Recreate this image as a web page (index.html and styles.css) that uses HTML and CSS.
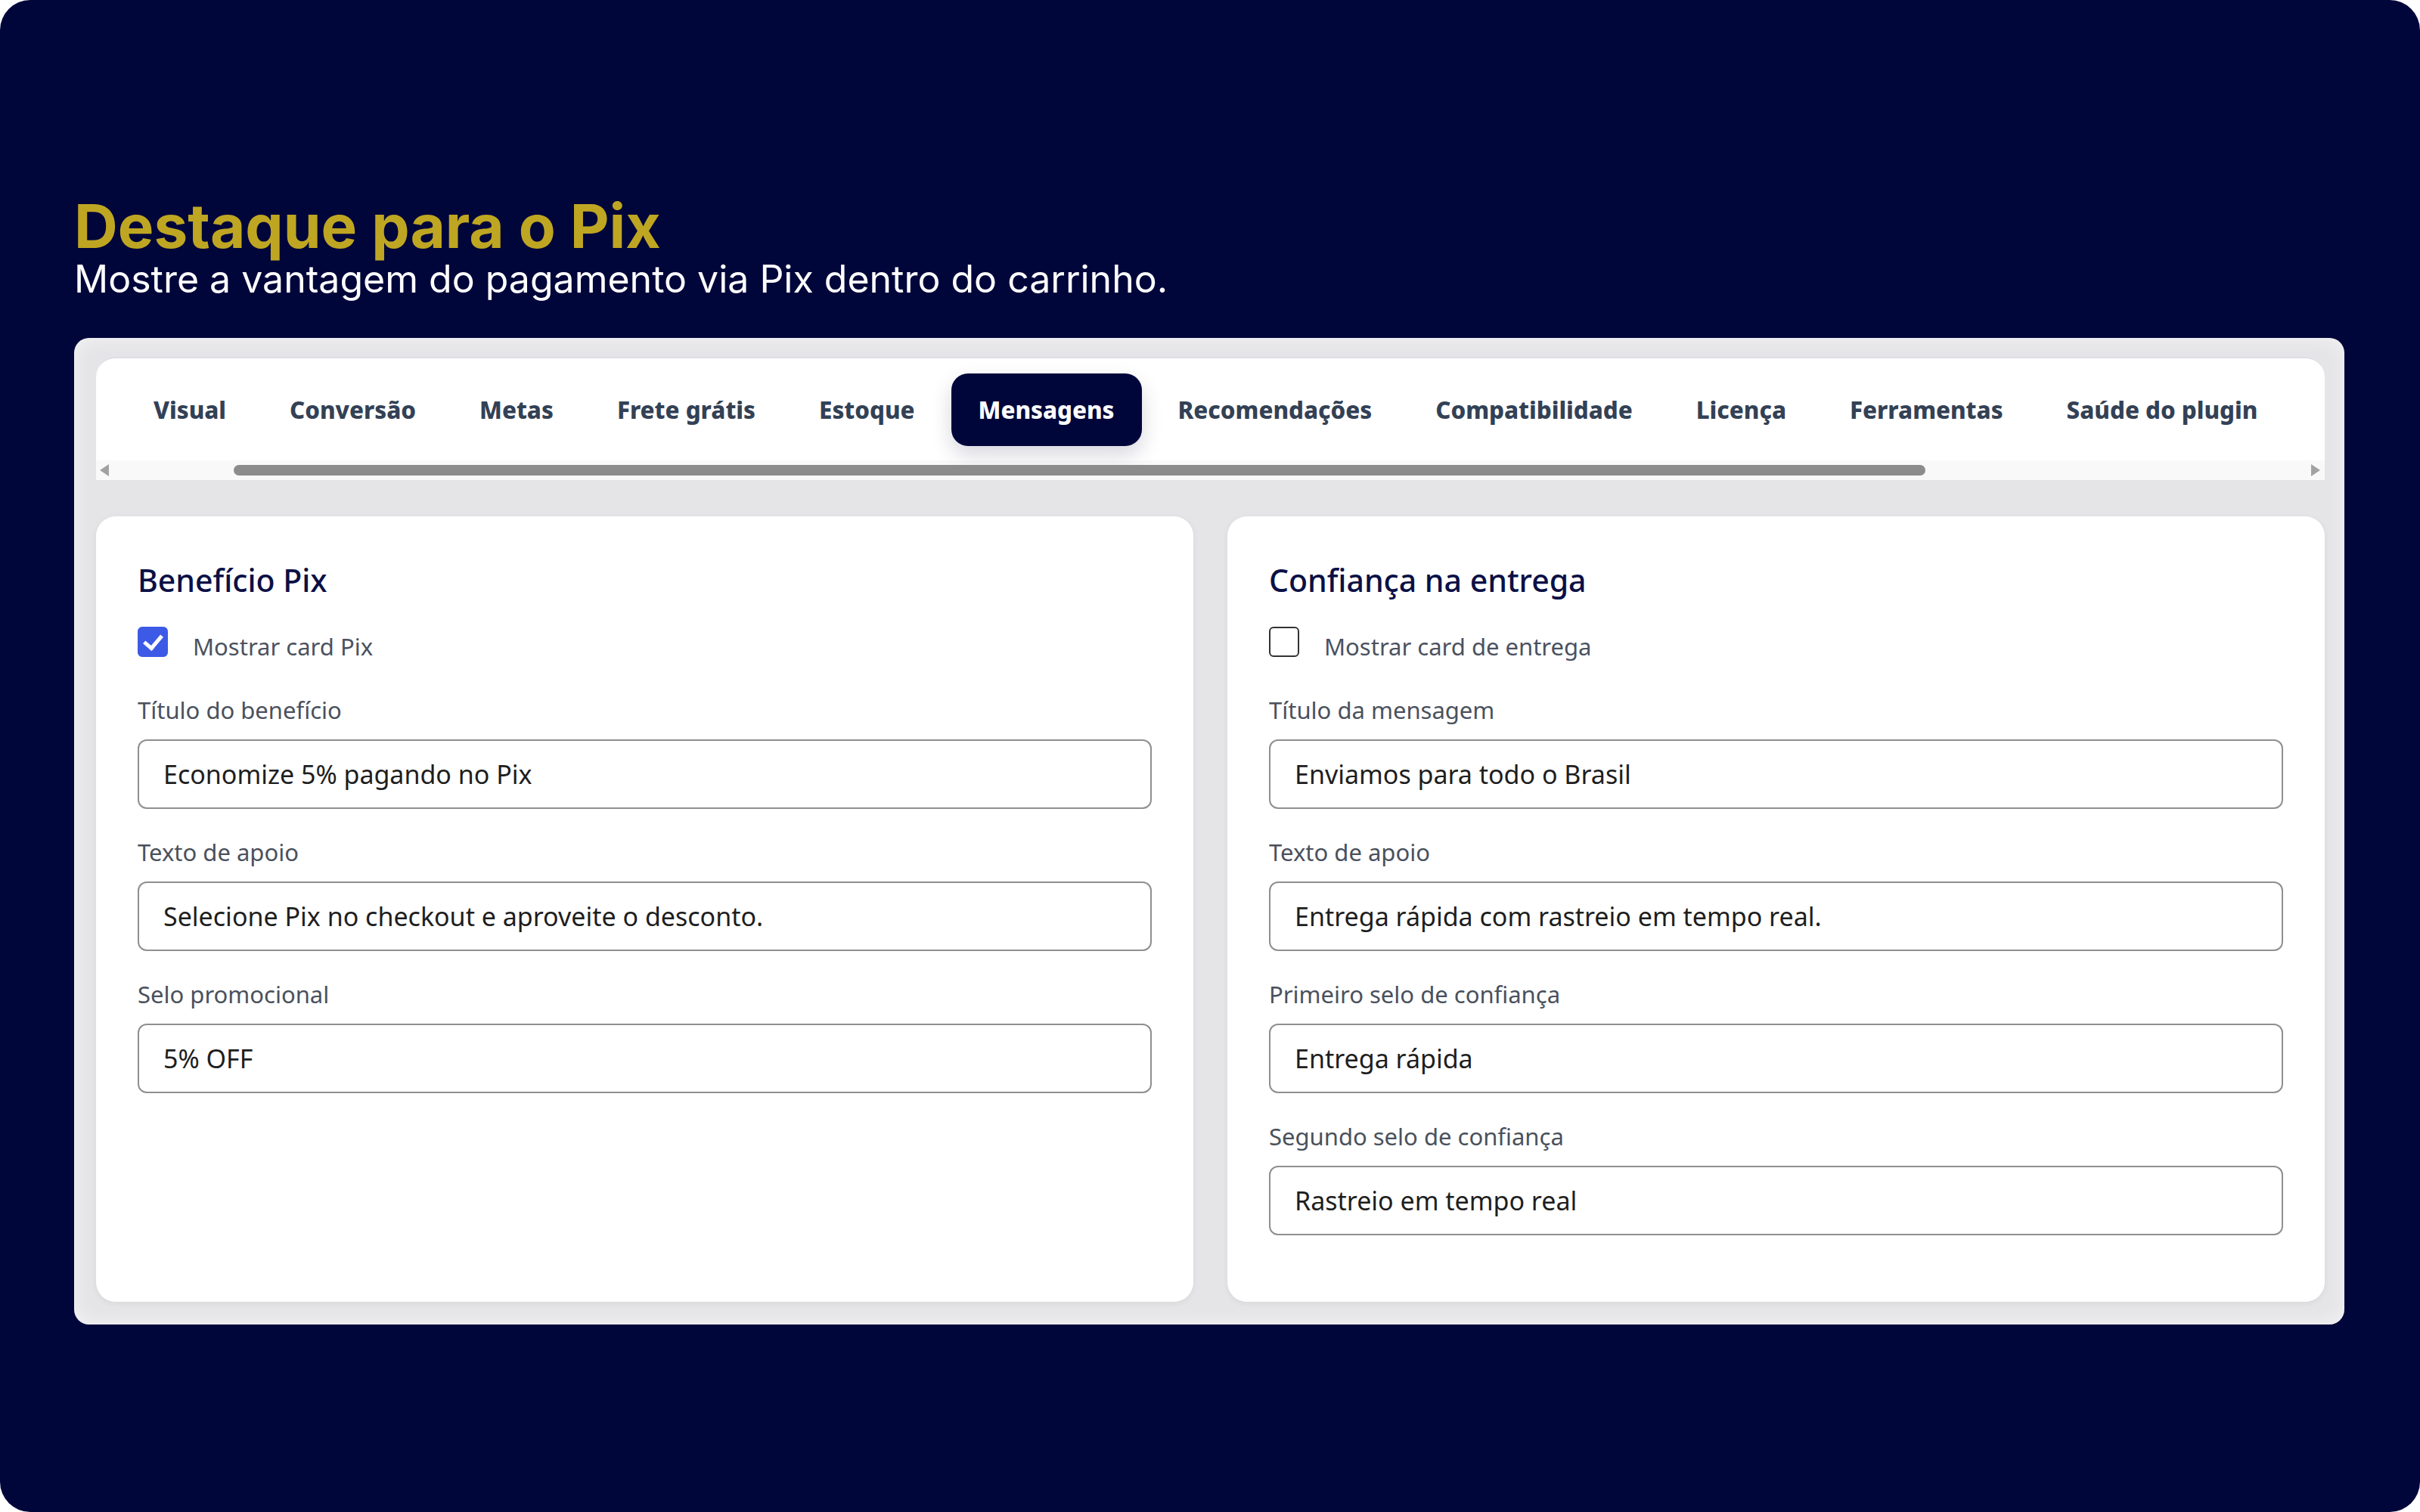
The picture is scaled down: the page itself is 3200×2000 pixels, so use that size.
FILE: index.html
```html
<!DOCTYPE html>
<html lang="pt-BR">
<head>
  <meta charset="UTF-8">
  <meta name="viewport" content="width=device-width, initial-scale=1.0">
  <title>Destaque para o Pix</title>
  <link rel="stylesheet" href="styles.css">
</head>
<body>
  <div class="frame">
    <header class="intro">
      <h1>Destaque para o Pix</h1>
      <p>Mostre a vantagem do pagamento via Pix dentro do carrinho.</p>
    </header>

    <div class="panel">
      <div class="tabs">
        <nav class="tab-list">
          <button class="tab">Visual</button>
          <button class="tab">Conversão</button>
          <button class="tab">Metas</button>
          <button class="tab">Frete grátis</button>
          <button class="tab">Estoque</button>
          <button class="tab active">Mensagens</button>
          <button class="tab">Recomendações</button>
          <button class="tab">Compatibilidade</button>
          <button class="tab">Licença</button>
          <button class="tab">Ferramentas</button>
          <button class="tab">Saúde do plugin</button>
        </nav>
        <div class="scrollbar">
          <span class="arrow arrow-left"></span>
          <span class="thumb"></span>
          <span class="arrow arrow-right"></span>
        </div>
      </div>

      <div class="cards">
        <section class="card">
          <h2>Benefício Pix</h2>
          <label class="check">
            <input type="checkbox" checked>
            <span>Mostrar card Pix</span>
          </label>
          <div class="field">
            <label for="pix-title">Título do benefício</label>
            <input type="text" id="pix-title" value="Economize 5% pagando no Pix">
          </div>
          <div class="field">
            <label for="pix-text">Texto de apoio</label>
            <input type="text" id="pix-text" value="Selecione Pix no checkout e aproveite o desconto.">
          </div>
          <div class="field">
            <label for="pix-badge">Selo promocional</label>
            <input type="text" id="pix-badge" value="5% OFF">
          </div>
        </section>

        <section class="card">
          <h2>Confiança na entrega</h2>
          <label class="check">
            <input type="checkbox">
            <span>Mostrar card de entrega</span>
          </label>
          <div class="field">
            <label for="ship-title">Título da mensagem</label>
            <input type="text" id="ship-title" value="Enviamos para todo o Brasil">
          </div>
          <div class="field">
            <label for="ship-text">Texto de apoio</label>
            <input type="text" id="ship-text" value="Entrega rápida com rastreio em tempo real.">
          </div>
          <div class="field">
            <label for="ship-badge-1">Primeiro selo de confiança</label>
            <input type="text" id="ship-badge-1" value="Entrega rápida">
          </div>
          <div class="field">
            <label for="ship-badge-2">Segundo selo de confiança</label>
            <input type="text" id="ship-badge-2" value="Rastreio em tempo real">
          </div>
        </section>
      </div>
    </div>
  </div>
</body>
</html>
```

FILE: styles.css
```css
body {
  margin: 0;
  background: #fff;
  font-family: 'Noto Sans', 'Open Sans', sans-serif;
}
.frame {
  width: 3200px;
  height: 2000px;
  box-sizing: border-box;
  padding: 259px 100px 0 98px;
  background: #00063a;
  border-radius: 40px;
}
.intro {
  margin-bottom: 48px;
  font-family: Inter, sans-serif;
}
.intro h1 {
  margin: 0;
  font-size: 80px;
  line-height: 80px;
  font-weight: 700;
  color: #bfa622;
}
.intro p {
  margin: 0;
  font-size: 50px;
  line-height: 60px;
  color: #fff;
}
.panel {
  padding: 25px 26px 30px 29px;
  background: #e5e5e8;
  border-radius: 20px;
  box-shadow: inset 0 0 24px rgba(255, 255, 255, 0.6);
}

/* tab strip */
.tabs {
  background: #fff;
  border-top: 2px solid #dedee6;
  border-radius: 26px 26px 0 0;
}
.tab-list {
  display: flex;
  gap: 12px;
  padding: 20px 40px 19px;
}
.tab {
  height: 96px;
  padding: 0 36px;
  border: none;
  border-radius: 22px;
  background: none;
  font-family: 'Noto Sans', sans-serif;
  font-size: 31.3px;
  font-weight: 800;
  color: #334155;
  white-space: nowrap;
  cursor: pointer;
}
.tab.active {
  background: #00063a;
  color: #fff;
  box-shadow: 0 12px 28px rgba(0, 6, 58, 0.16);
}
.scrollbar {
  display: flex;
  align-items: center;
  height: 26px;
  padding: 0 6px 0 5px;
  background: #f9f9f9;
}
.arrow {
  width: 0;
  height: 0;
  border-top: 8px solid transparent;
  border-bottom: 8px solid transparent;
}
.arrow-left {
  border-right: 12px solid #a2a2a2;
}
.arrow-right {
  margin-left: auto;
  border-left: 12px solid #a2a2a2;
}
.thumb {
  width: 2237px;
  height: 14px;
  margin-left: 165px;
  border-radius: 7px;
  background: #8c8c8c;
}

/* settings cards */
.cards {
  display: grid;
  grid-template-columns: 1fr 1fr;
  gap: 45px;
  margin-top: 48px;
}
.card {
  padding: 60px 55px 51px;
  background: #fff;
  border-radius: 26px;
  box-shadow: 0 2px 8px rgba(0, 0, 0, 0.06);
}
.card h2 {
  margin: 0;
  font-size: 41px;
  line-height: 49px;
  font-weight: 500;
  color: #0b1046;
}
.check {
  display: flex;
  align-items: center;
  gap: 33px;
  margin: 31px 0 44px;
  font-size: 31px;
  line-height: 40px;
  color: #4b5260;
}
.check span {
  padding-top: 12px;
}
.check input {
  appearance: none;
  position: relative;
  width: 40px;
  height: 40px;
  margin: 0;
  border: 2px solid #333;
  border-radius: 6px;
  background: #fff;
}
.check input:checked {
  border-color: #3d5ae6;
  background: #3d5ae6;
}
.check input:checked::after {
  content: '';
  position: absolute;
  left: 11px;
  top: 4px;
  width: 10px;
  height: 19px;
  border: solid #fff;
  border-width: 0 5px 5px 0;
  transform: rotate(40deg);
}
.field {
  margin-bottom: 37px;
}
.field label {
  display: block;
  margin-bottom: 19px;
  font-size: 31px;
  line-height: 40px;
  color: #4a515c;
}
.field input {
  width: 100%;
  height: 92px;
  box-sizing: border-box;
  padding: 0 32px;
  border: 2px solid #8f8f8f;
  border-radius: 12px;
  font-family: 'Noto Sans', sans-serif;
  font-size: 34px;
  color: #1e1e1e;
  background: #fff;
}
```
